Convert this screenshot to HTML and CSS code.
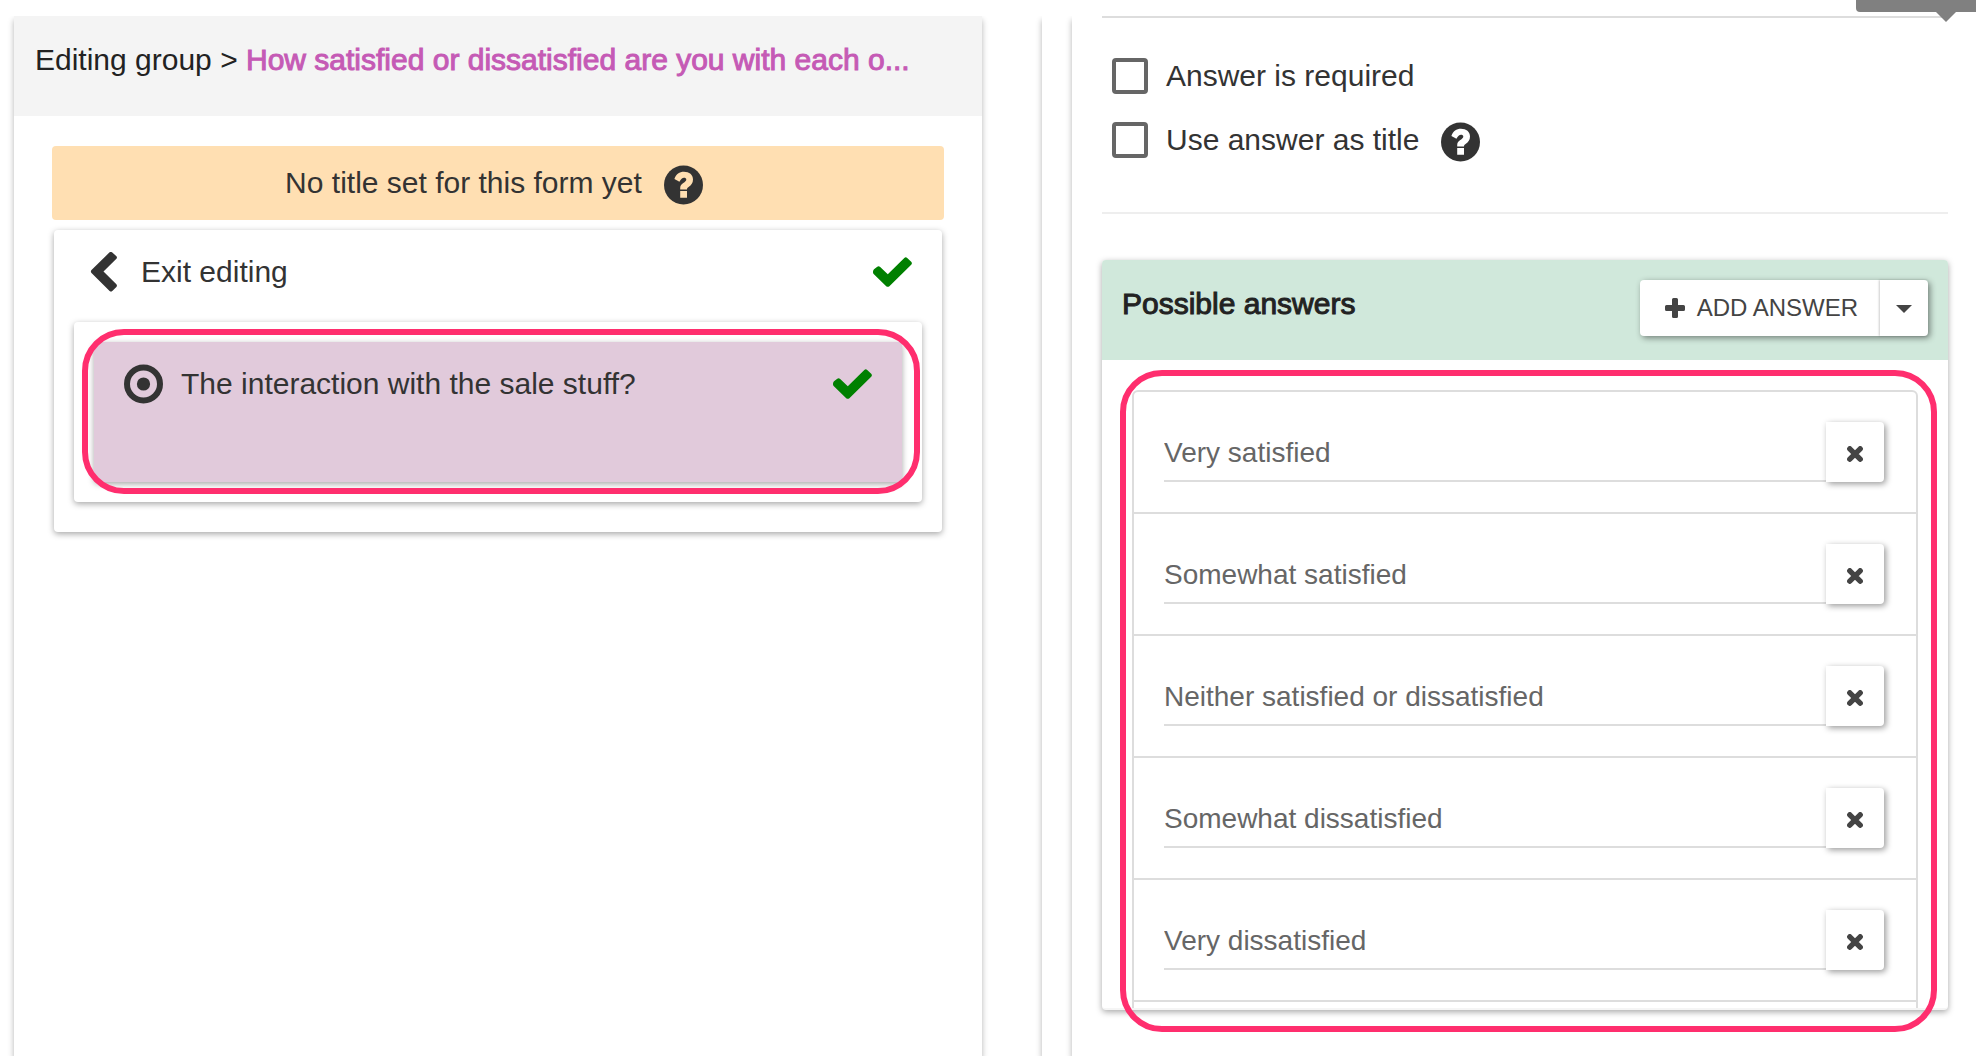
FILE: index.html
```html
<!DOCTYPE html>
<html lang="en">
<head>
<meta charset="utf-8">
<title>Form editor</title>
<link rel="stylesheet" href="styles.css">
</head>
<body>
<svg class="sprite" aria-hidden="true">
  <symbol id="help" viewBox="0 0 39 39">
    <circle cx="19.5" cy="19.5" r="19.5"/>
    <path fill="var(--mark)" d="M10.4 13.4C12 8.800 15.500 6.300 19.900 6.300C25.300 6.300 29 9.300 29 14C29 17.500 27.200 19.700 24.900 21.200C23.400 22.200 23 22.800 23 24H16.200V22.500C16.200 20 17.500 18.700 19.300 17.500C21 16.400 22.300 15.400 22.300 14C22.300 12.800 21.300 12.200 20 12.200C18.300 12.200 17 13.200 15.400 16.300ZM16.200 25.500H23V32.300H16.200Z"/>
  </symbol>
  <symbol id="check" viewBox="0 0 39 30">
    <path d="M1 12.300L4.300 9.700Q5.700 8.700 7.200 10L14.800 17.300L31.300 .900Q32.700 -.400 34.200 .900L38.200 4.700Q39.600 6.200 38.200 7.700L16.400 29.200Q14.800 30.500 13.200 29.200L.900 17.300Q-.700 15.600 .500 13.100Z"/>
  </symbol>
  <symbol id="back" viewBox="0 0 39 40">
    <path d="M7.500 17.900L25.600 .300Q27 -.600 28.300 .500L32.400 4.200Q33.500 5.400 32.400 6.700L19.500 19.500L32.400 32.300Q33.500 33.600 32.400 34.900L28.300 39Q27 40 25.600 39L7.500 21.100Q6.200 19.500 7.500 17.900Z"/>
  </symbol>
  <symbol id="radio" viewBox="0 0 39 39">
    <circle cx="19.500" cy="19.500" r="16.500" fill="none" stroke="currentColor" stroke-width="6"/>
    <circle cx="19.500" cy="19.500" r="6.600"/>
  </symbol>
  <symbol id="plus" viewBox="0 0 20 20">
    <path d="M8.500 0h3q1.500 0 1.500 1.500V7h5.500q1.500 0 1.500 1.500v3q0 1.500-1.500 1.500H13v5.500q0 1.500-1.500 1.500h-3Q7 20 7 18.500V13H1.500Q0 13 0 11.500v-3Q0 7 1.500 7H7V1.500Q7 0 8.500 0Z"/>
  </symbol>
  <symbol id="cross" viewBox="0 0 16 16">
    <path d="M2.800 2.800L13.200 13.200M13.200 2.800L2.800 13.200" fill="none" stroke="currentColor" stroke-width="5.400" stroke-linecap="round"/>
  </symbol>
  <symbol id="caret" viewBox="0 0 16 8"><path d="M0 0H16L8 8Z"/></symbol>
</svg>

<main class="page">
  <section class="panel">
    <header class="panel-header">
      <h1 class="heading">Editing group &gt; <span class="strong accent">How satisfied or dissatisfied are you with each o...</span></h1>
    </header>
    <div class="panel-body">
      <p class="notice">No title set for this form yet <svg class="icon help"><use href="#help"/></svg></p>
      <div class="card group">
        <div class="row">
          <button class="row-button" type="button"><svg class="icon"><use href="#back"/></svg>Exit editing</button>
          <svg class="icon ok"><use href="#check"/></svg>
        </div>
        <div class="card children">
          <div class="card question">
            <div class="row">
              <button class="row-button" type="button"><svg class="icon"><use href="#radio"/></svg>The interaction with the sale stuff?</button>
              <svg class="icon ok"><use href="#check"/></svg>
            </div>
          </div>
          <div class="highlight highlight-question"></div>
        </div>
      </div>
    </div>
  </section>

  <section class="panel outer">
    <div class="panel settings">
      <div class="options">
        <div class="option"><input class="box" type="checkbox" id="required"><label for="required">Answer is required</label></div>
        <div class="option"><input class="box" type="checkbox" id="as-title"><label for="as-title">Use answer as title</label><svg class="icon help"><use href="#help"/></svg></div>
      </div>
      <div class="card answers">
        <header class="answers-header">
          <h2 class="heading strong">Possible answers</h2>
          <div class="split">
            <button class="add" type="button"><svg class="plus"><use href="#plus"/></svg>ADD ANSWER</button>
            <button class="more" type="button" aria-label="More answer types"><svg class="caret"><use href="#caret"/></svg></button>
          </div>
        </header>
        <div class="answers-body">
          <ul class="list">
            <li class="answer"><input class="field" type="text" aria-label="Answer 1" value="Very satisfied"><button class="remove" type="button" aria-label="Remove"><svg class="cross"><use href="#cross"/></svg></button></li>
            <li class="answer"><input class="field" type="text" aria-label="Answer 2" value="Somewhat satisfied"><button class="remove" type="button" aria-label="Remove"><svg class="cross"><use href="#cross"/></svg></button></li>
            <li class="answer"><input class="field" type="text" aria-label="Answer 3" value="Neither satisfied or dissatisfied"><button class="remove" type="button" aria-label="Remove"><svg class="cross"><use href="#cross"/></svg></button></li>
            <li class="answer"><input class="field" type="text" aria-label="Answer 4" value="Somewhat dissatisfied"><button class="remove" type="button" aria-label="Remove"><svg class="cross"><use href="#cross"/></svg></button></li>
            <li class="answer"><input class="field" type="text" aria-label="Answer 5" value="Very dissatisfied"><button class="remove" type="button" aria-label="Remove"><svg class="cross"><use href="#cross"/></svg></button></li>
          </ul>
        </div>
        <div class="highlight highlight-answers"></div>
      </div>
    </div>
  </section>
</main>
<div class="tooltip"></div>
</body>
</html>
```
FILE: styles.css
```css
* {
  box-sizing: border-box;
}

html,
body {
  height: 100%;
}

body {
  margin: 0;
  overflow: hidden;
  background: #fff;
  color: #333;
  font: 30px/40px "Liberation Sans", Arial, sans-serif;
  --mark: #fff;
}

button,
input {
  margin: 0;
  padding: 0;
  border: 0;
  background: none;
  color: inherit;
  font: inherit;
}

.sprite {
  position: absolute;
  width: 0;
  height: 0;
}

svg {
  display: block;
  flex: none;
  fill: currentColor;
}

.icon {
  width: 39px;
  height: 40px;
}

.help {
  margin: 4px 0 0 4px;
}

/* Two panels; the right one runs past the edge of the window. */
.page {
  display: grid;
  grid-template-columns: 1fr 1fr;
  gap: 60px;
  min-height: calc(100% - 16px);
  margin: 16px -34px 0 0;
  padding-left: 14px;
  clip-path: inset(0);
}

.panel {
  background: #fff;
  box-shadow: 0 4px 6px rgba(0, 0, 0, .3);
}

.panel-header {
  height: 100px;
  padding: 24px 21px;
  background: #f4f4f4;
}

.heading {
  margin: 0;
  color: #222;
  font-size: 30px;
  font-weight: 400;
  white-space: nowrap;
}

.strong {
  -webkit-text-stroke: 1px currentColor;
}

.accent {
  color: #c55ab5;
}

.panel-body {
  padding: 30px 38px;
}

.notice {
  --mark: #ffdfb2;
  display: flex;
  align-items: center;
  justify-content: center;
  gap: 18px;
  height: 74px;
  margin: 0;
  padding-right: 8px;
  border-radius: 4px;
  background: #ffdfb2;
}

.card {
  border-radius: 4px;
  background: #fff;
  box-shadow: 0 2px 6px rgba(0, 0, 0, .35);
}

.group {
  margin: 10px 2px 0;
  padding-bottom: 30px;
}

.row {
  display: flex;
  align-items: center;
  justify-content: space-between;
  height: 84px;
  padding: 0 30px;
}

.row-button {
  display: flex;
  align-items: center;
  gap: 18px;
}

.ok {
  height: 30px;
  color: #008000;
}

.children {
  position: relative;
  margin: 8px 20px 0;
  padding: 20px;
}

.question {
  height: 140px;
  background: #e1cadb;
}

.highlight {
  position: absolute;
  border: 6px solid #ff2e6e;
  border-radius: 42px;
  pointer-events: none;
}

.highlight-question {
  inset: 7px 2px 8px 8px;
}

.outer {
  padding-left: 30px;
}

.settings {
  height: 100%;
  margin-right: 32px;
  padding: 0 30px;
}

.options {
  padding: 26px 10px 40px;
  border-top: 2px solid #ddd;
  border-bottom: 2px solid #eee;
}

.option {
  display: flex;
  align-items: center;
  gap: 18px;
  height: 64px;
}

.box {
  appearance: none;
  width: 36px;
  height: 36px;
  border: 4px solid #666;
  border-radius: 4px;
}

.answers {
  position: relative;
  margin-top: 46px;
  border-bottom: 2px solid #f5f5f5;
}

.answers-header {
  display: flex;
  justify-content: space-between;
  height: 100px;
  padding: 20px 20px 24px;
  border-radius: 4px 4px 0 0;
  background: #d0e8db;
}

.answers-header .heading {
  padding-top: 4px;
}

.split {
  display: flex;
  height: 56px;
  border-radius: 4px;
  background: #fff;
  box-shadow: 2px 2px 6px rgba(0, 0, 0, .45);
  color: #444;
  font-size: 24px;
}

.add {
  display: flex;
  align-items: center;
  gap: 12px;
  padding: 0 22px 0 25px;
}

.more {
  display: flex;
  align-items: center;
  justify-content: center;
  width: 48px;
  padding-top: 2px;
  box-shadow: -1px 0 2px rgba(0, 0, 0, .2);
}

.plus {
  width: 20px;
  height: 20px;
}

.caret {
  width: 16px;
  height: 8px;
}

.cross {
  width: 16px;
  height: 16px;
}

.answers-body {
  height: 648px;
  padding: 30px 30px 0;
  overflow: hidden;
}

.list {
  height: 640px;
  margin: 0;
  padding: 0;
  border: 2px solid #ddd;
  border-radius: 6px;
  list-style: none;
}

.answer {
  display: flex;
  height: 122px;
  padding: 30px 32px 30px 30px;
  border-bottom: 2px solid #ddd;
}

.field {
  flex: 1;
  min-width: 0;
  height: 60px;
  padding-top: 4px;
  border-bottom: 2px solid #ddd;
  color: #666;
  font-size: 28px;
}

.remove {
  display: flex;
  align-items: center;
  justify-content: center;
  width: 58px;
  height: 60px;
  padding-top: 4px;
  border-radius: 0 4px 4px 0;
  background: #fff;
  box-shadow: 2px 2px 6px rgba(0, 0, 0, .4);
  color: #444;
}

.highlight-answers {
  inset: 110px 11px -24px 18px;
}

/* Lower edge of a tooltip that sits above the visible area. */
.tooltip {
  position: absolute;
  top: 0;
  right: 0;
  width: 120px;
  height: 12px;
  border-radius: 0 0 0 4px;
  background: #808080;
}

.tooltip::after {
  content: "";
  position: absolute;
  top: 12px;
  right: 20px;
  border: 10px solid transparent;
  border-top-color: #808080;
  border-bottom: 0;
}
```
